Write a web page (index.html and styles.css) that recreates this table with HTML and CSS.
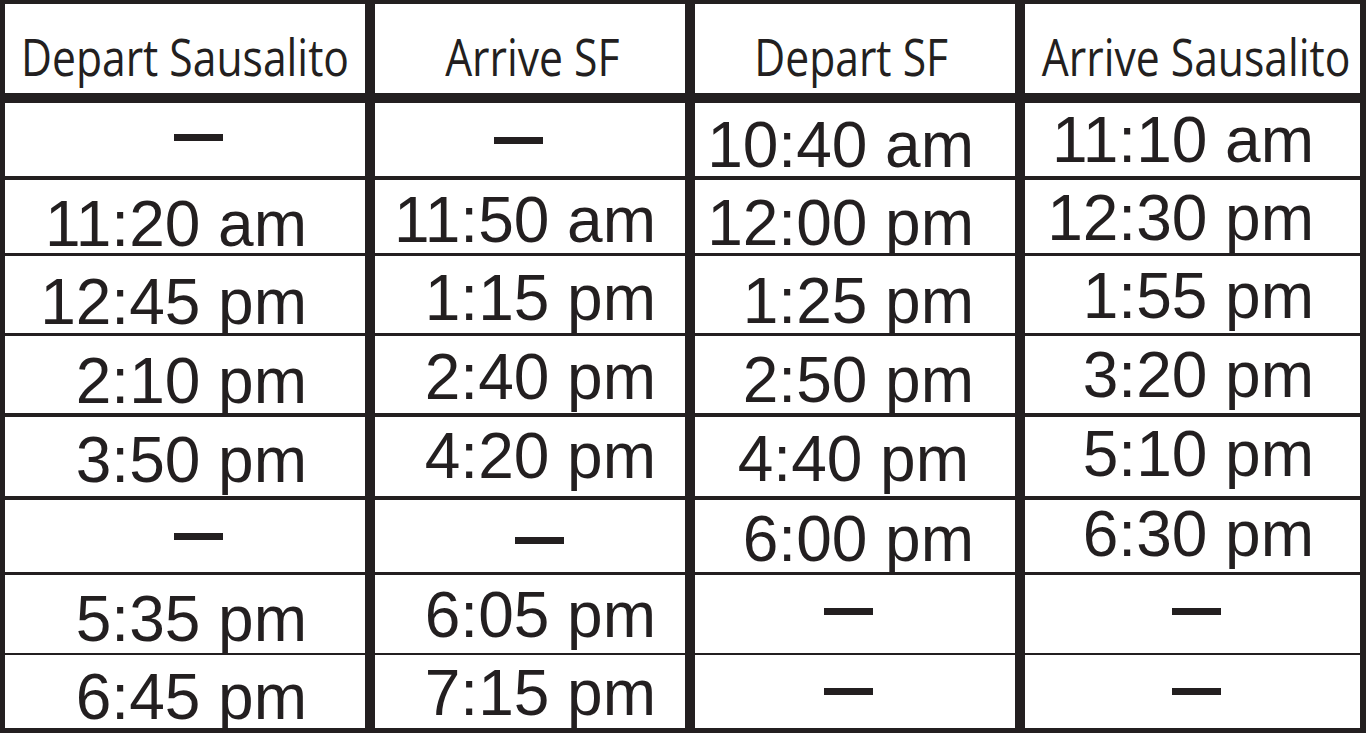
FILE: index.html
```html
<!DOCTYPE html>
<html lang="en">
<head>
<meta charset="utf-8">
<title>Sausalito Ferry Schedule</title>
<link rel="stylesheet" href="styles.css">
</head>
<body>
<div class="schedule">
  <div class="row row-head">
    <div class="head c1"><span class="head-label">Depart Sausalito</span></div>
    <div class="head c2"><span class="head-label">Arrive SF</span></div>
    <div class="head c3"><span class="head-label">Depart SF</span></div>
    <div class="head c4"><span class="head-label">Arrive Sausalito</span></div>
  </div>
  <div class="row r1">
    <div class="cell c1 empty d-hi"><span class="dash" aria-label="none"></span></div>
    <div class="cell c2 empty d-mid"><span class="dash" aria-label="none"></span></div>
    <div class="cell c3"><span class="time">10:40 am</span></div>
    <div class="cell c4"><span class="time">11:10 am</span></div>
  </div>
  <div class="row r2">
    <div class="cell c1"><span class="time">11:20 am</span></div>
    <div class="cell c2"><span class="time">11:50 am</span></div>
    <div class="cell c3"><span class="time">12:00 pm</span></div>
    <div class="cell c4"><span class="time">12:30 pm</span></div>
  </div>
  <div class="row r3">
    <div class="cell c1"><span class="time">12:45 pm</span></div>
    <div class="cell c2"><span class="time">1:15 pm</span></div>
    <div class="cell c3"><span class="time">1:25 pm</span></div>
    <div class="cell c4"><span class="time">1:55 pm</span></div>
  </div>
  <div class="row r4">
    <div class="cell c1"><span class="time">2:10 pm</span></div>
    <div class="cell c2"><span class="time">2:40 pm</span></div>
    <div class="cell c3"><span class="time">2:50 pm</span></div>
    <div class="cell c4"><span class="time">3:20 pm</span></div>
  </div>
  <div class="row r5">
    <div class="cell c1"><span class="time">3:50 pm</span></div>
    <div class="cell c2"><span class="time">4:20 pm</span></div>
    <div class="cell c3 nudge-left"><span class="time">4:40 pm</span></div>
    <div class="cell c4"><span class="time">5:10 pm</span></div>
  </div>
  <div class="row r6">
    <div class="cell c1 empty"><span class="dash" aria-label="none"></span></div>
    <div class="cell c2 empty d-low d-shift"><span class="dash" aria-label="none"></span></div>
    <div class="cell c3"><span class="time">6:00 pm</span></div>
    <div class="cell c4"><span class="time">6:30 pm</span></div>
  </div>
  <div class="row r7">
    <div class="cell c1"><span class="time">5:35 pm</span></div>
    <div class="cell c2"><span class="time">6:05 pm</span></div>
    <div class="cell c3 empty"><span class="dash" aria-label="none"></span></div>
    <div class="cell c4 empty d-c4"><span class="dash" aria-label="none"></span></div>
  </div>
  <div class="row r8">
    <div class="cell c1"><span class="time">6:45 pm</span></div>
    <div class="cell c2"><span class="time">7:15 pm</span></div>
    <div class="cell c3 empty"><span class="dash" aria-label="none"></span></div>
    <div class="cell c4 empty d-c4"><span class="dash" aria-label="none"></span></div>
  </div>
</div>
</body>
</html>
```

FILE: styles.css
```css
html, body {
  margin: 0;
  padding: 0;
  background: #ffffff;
}

.schedule {
  width: 1366px;
  height: 733px;
  box-sizing: border-box;
  background: #231f20;
  padding: 4px 6px 5px 5px;
  display: flex;
  flex-direction: column;
  color: #231f20;
}

.row {
  display: grid;
  grid-template-columns: 360px 310px 320px 335px;
  grid-template-rows: minmax(0, 1fr);
  column-gap: 10px;
  flex: none;
  --dy: 0px;
}

.row-head { height: 89px; margin-bottom: 10px; }
.r1 { height: 73px; --dy: -1px; }
.r2 { height: 73px; margin-top: 4px; --dy: 0px; }
.r3 { height: 77px; margin-top: 3px; --dy: 2px; }
.r4 { height: 77px; margin-top: 3px; --dy: 1px; }
.r5 { height: 79px; margin-top: 4px; --dy: -1px; }
.r6 { height: 72px; margin-top: 4px; --dy: -4px; }
.r7 { height: 78px; margin-top: 3px; --dy: 0px; }
.r8 { height: 73px; margin-top: 2px; --dy: -2px; }

.c1 { --pt: 12px; --pr: 58px; }
.c2 { --pt: 8px;  --pr: 29px; }
.c3 { --pt: 11px; --pr: 41px; }
.c4 { --pt: 6px;  --pr: 46px; }

.head {
  background: #ffffff;
  display: flex;
  justify-content: center;
  align-items: flex-start;
  padding-top: 26px;
  box-sizing: border-box;
  min-height: 0;
}
.head.c2 { padding-left: 5px; }
.head.c3 { padding-right: 8px; }
.head.c4 { padding-left: 8px; }

.head-label {
  display: inline-block;
  font-family: "Open Sans", "Noto Sans", sans-serif;
  font-size: 52px;
  line-height: 1;
  white-space: nowrap;
  transform: scaleX(0.82);
  transform-origin: center top;
}

.cell {
  background: #ffffff;
  display: flex;
  justify-content: flex-end;
  align-items: flex-start;
  box-sizing: border-box;
  min-height: 0;
  padding-top: calc(var(--pt) + var(--dy));
  padding-right: var(--pr);
}
.cell.nudge-left { padding-right: calc(var(--pr) + 5px); }

.time {
  font-family: "Liberation Sans", Arial, Helvetica, sans-serif;
  font-size: 64px;
  line-height: 1;
  white-space: nowrap;
}

.cell.empty {
  padding-top: 33px;
  padding-right: 142px;
}
.cell.empty.d-hi { padding-top: 31px; }
.cell.empty.d-mid { padding-top: 34px; }
.cell.empty.d-low { padding-top: 37px; }
.cell.empty.d-shift { padding-right: 121px; }
.cell.empty.d-c4 { padding-right: 139px; }

.dash {
  display: block;
  width: 49px;
  height: 7px;
  background: #231f20;
}
```
